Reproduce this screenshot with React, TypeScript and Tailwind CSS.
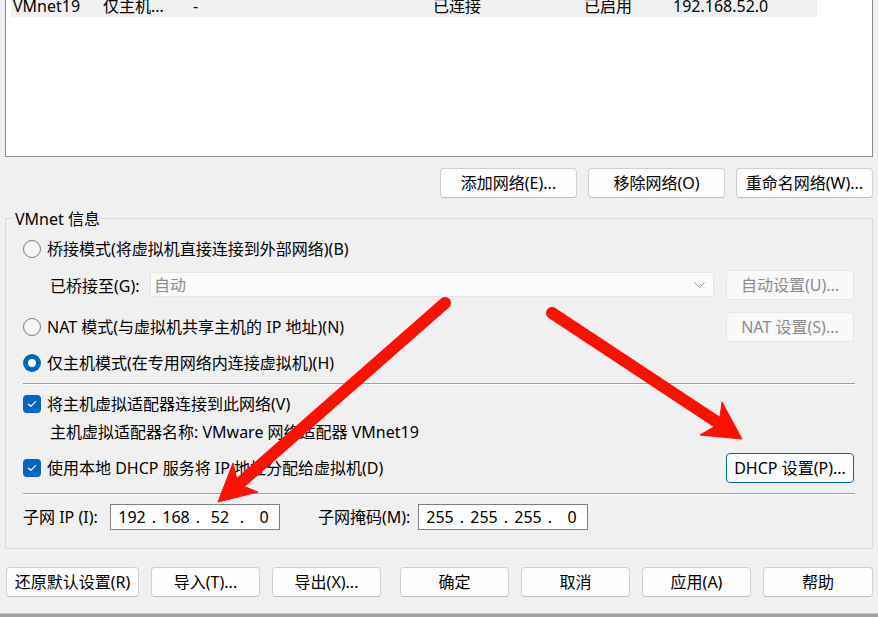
import type { ReactNode } from 'react';

function Btn({
  className = '',
  disabled = false,
  focused = false,
  children,
}: {
  className?: string;
  disabled?: boolean;
  focused?: boolean;
  children: ReactNode;
}) {
  const tone = disabled
    ? 'bg-[#f9f9f9] border-[#e6e6e6] text-[#8c8c8c]'
    : focused
      ? 'bg-[#fdfdfd] border-[#0067c0] text-black'
      : 'bg-[#fdfdfd] border-[#d0d0d0] border-b-[#bdbdbd] text-black';
  return (
    <button
      className={`h-[30px] shrink-0 rounded-[4px] border text-[16px] leading-none flex items-center justify-center ${tone} ${className}`}
    >
      {children}
    </button>
  );
}

function Radio({ checked = false }: { checked?: boolean }) {
  if (checked) {
    return (
      <span className="w-[18px] h-[18px] rounded-full bg-[#0067c0] flex items-center justify-center shrink-0">
        <span className="w-[8px] h-[8px] rounded-full bg-white" />
      </span>
    );
  }
  return <span className="w-[18px] h-[18px] rounded-full border border-[#7a7a7a] bg-[#f5f5f5] shrink-0" />;
}

function Check() {
  return (
    <span className="w-[18px] h-[18px] rounded-[4px] bg-[#0067c0] flex items-center justify-center shrink-0">
      <svg width="10" height="8" viewBox="0 0 10 8" fill="none">
        <path d="M1.5 4.2 L3.8 6.3 L8.5 1.6" stroke="white" strokeWidth="1.2" strokeLinecap="round" strokeLinejoin="round" />
      </svg>
    </span>
  );
}

function IpBox({ parts }: { parts: string[] }) {
  return (
    <div className="w-[170px] h-[26px] bg-white border border-[#7f7f7f] flex items-center pl-[3px]">
      {parts.map((p, i) => (
        <div key={i} className="flex items-center">
          {i > 0 && <span className="w-[8px] text-center">.</span>}
          <span className="w-[36px] text-center">{p}</span>
        </div>
      ))}
    </div>
  );
}

function Separator() {
  return <div className="h-[2px] border-t border-[#a0a0a0] border-b border-b-white" />;
}

export default function App() {
  return (
    <div className="relative w-[878px] h-[617px] overflow-hidden bg-[#f0f0f0] text-black text-[16px] font-['Noto_Sans','Noto_Sans_CJK_SC',sans-serif]">
      {/* network list (scrolled to the bottom) */}
      <div className="ml-[5px] w-[868px] h-[157px] bg-white border-x border-b border-[#878a91] overflow-hidden">
        <div className="-mt-[5px] ml-[5px] w-[806px] h-[22px] bg-[#f0f0f0] flex items-center leading-none">
          <span className="w-[92px] pl-[2px]">VMnet19</span>
          <span className="w-[90px]">仅主机...</span>
          <span className="w-[240px]">-</span>
          <span className="w-[151px]">已连接</span>
          <span className="w-[89px]">已启用</span>
          <span>192.168.52.0</span>
        </div>
      </div>

      <div className="mt-[11px] pr-[5px] flex justify-end gap-[11px]">
        <Btn className="w-[137px]">添加网络(E)...</Btn>
        <Btn className="w-[137px]">移除网络(O)</Btn>
        <Btn className="w-[137px]">重命名网络(W)...</Btn>
      </div>

      {/* VMnet info group */}
      <div className="relative mt-[20px] ml-[5px] w-[868px] h-[331px] border border-[#d9d9d9] pl-[17px] pr-[17px] pt-[19px] flex flex-col leading-none">
        <span className="absolute left-[8px] -top-[11px] h-[22px] px-[1px] bg-[#f0f0f0] flex items-center">VMnet 信息</span>

        <div className="h-[22px] flex items-center gap-[6px]">
          <Radio />
          <span>桥接模式(将虚拟机直接连接到外部网络)(B)</span>
        </div>

        <div className="mt-[10px] h-[29px] flex items-center">
          <span className="ml-[27px] w-[100px] pt-[2px]">已桥接至(G):</span>
          <div className="w-[564px] h-[25px] bg-[#fafafa] border border-[#e6e6e6] rounded-[2px] flex items-center pl-[3px] pr-[8px] text-[#8c8c8c]">
            <span className="flex-1">自动</span>
            <svg width="11" height="6" viewBox="0 0 11 6" fill="none">
              <path d="M0.5 0.5 L5.5 5.5 L10.5 0.5" stroke="#9a9a9a" strokeWidth="1" />
            </svg>
          </div>
          <Btn disabled className="ml-[12px] w-[128px] h-[29px]">自动设置(U)...</Btn>
        </div>

        <div className="mt-[13px] h-[29px] flex items-center gap-[6px]">
          <Radio />
          <span className="flex-1">NAT 模式(与虚拟机共享主机的 IP 地址)(N)</span>
          <Btn disabled className="mr-[1px] w-[128px] h-[29px]">NAT 设置(S)...</Btn>
        </div>

        <div className="mt-[11px] h-[22px] flex items-center gap-[6px]">
          <Radio checked />
          <span>仅主机模式(在专用网络内连接虚拟机)(H)</span>
        </div>

        <div className="mt-[9px]">
          <Separator />
        </div>

        <div className="mt-[8px] h-[22px] flex items-center gap-[6px]">
          <Check />
          <span>将主机虚拟适配器连接到此网络(V)</span>
        </div>

        <div className="mt-[6px] h-[22px] flex items-center pl-[27px]">
          主机虚拟适配器名称: VMware 网络适配器 VMnet19
        </div>

        <div className="mt-[10px] h-[29px] flex items-center gap-[6px]">
          <Check />
          <span className="flex-1">使用本地 DHCP 服务将 IP 地址分配给虚拟机(D)</span>
          <Btn focused className="mr-[1px] w-[128px] h-[29px]">DHCP 设置(P)...</Btn>
        </div>

        <div className="mt-[11px]">
          <Separator />
        </div>

        <div className="mt-[9px] h-[26px] flex items-center">
          <span className="w-[87px]">子网 IP (I):</span>
          <IpBox parts={['192', '168', '52', '0']} />
          <span className="ml-[38px] w-[100px]">子网掩码(M):</span>
          <IpBox parts={['255', '255', '255', '0']} />
        </div>
      </div>

      {/* dialog buttons */}
      <div className="mt-[18px] ml-[6px] flex">
        <Btn className="w-[133px]">还原默认设置(R)</Btn>
        <Btn className="ml-[12px] w-[109px]">导入(T)...</Btn>
        <Btn className="ml-[12px] w-[109px]">导出(X)...</Btn>
        <Btn className="ml-[19px] w-[109px]">确定</Btn>
        <Btn className="ml-[12px] w-[109px]">取消</Btn>
        <Btn className="ml-[12px] w-[109px]">应用(A)</Btn>
        <Btn className="ml-[12px] w-[110px]">帮助</Btn>
      </div>

      <div className="mt-[16px] h-[4px] bg-[#a2a2a2] border-t border-[#c6c6c6]" />

      {/* red annotation arrows */}
      <svg className="absolute inset-0 pointer-events-none" width="878" height="617" viewBox="0 0 878 617">
        <g fill="#ff1000" stroke="#ff1000">
          <line x1="445" y1="303" x2="240" y2="483" strokeWidth="12" strokeLinecap="round" />
          <polygon points="218,502 258,492 238,484 233,463" strokeWidth="1" strokeLinejoin="round" />
          <line x1="552" y1="313" x2="720" y2="424" strokeWidth="12" strokeLinecap="round" />
          <polygon points="742,439 722,402 719,424 700,435" strokeWidth="1" strokeLinejoin="round" />
        </g>
      </svg>
    </div>
  );
}
